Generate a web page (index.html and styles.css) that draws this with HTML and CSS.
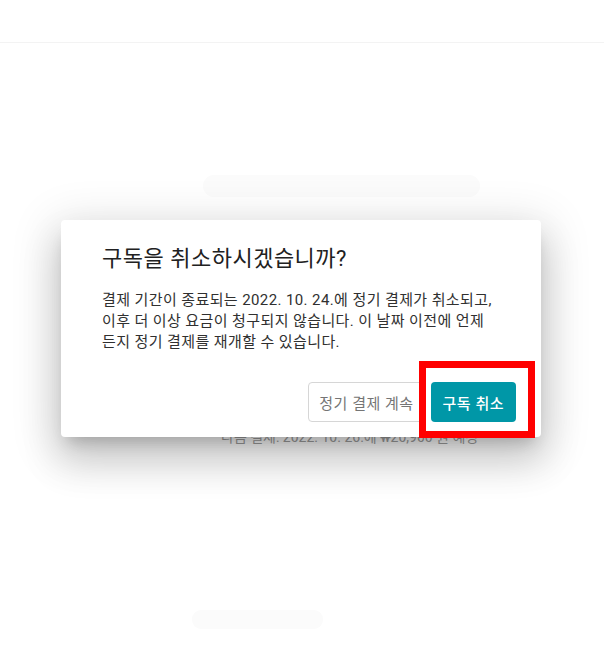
FILE: index.html
```html
<!DOCTYPE html>
<html lang="ko">
<head>
<meta charset="utf-8">
<title>구독 취소</title>
<link rel="stylesheet" href="styles.css">
</head>
<body>
<header class="topbar"></header>
<main class="page">
  <div class="skeleton skeleton-wide"></div>
  <p class="next-payment">다음 결제: 2022. 10. 26.에 ₩20,900 원 예정</p>
  <div class="skeleton skeleton-short"></div>
</main>

<div class="dialog" role="dialog">
  <h2 class="dialog-title">구독을 취소하시겠습니까?</h2>
  <p class="dialog-body">결제 기간이 종료되는 2022. 10. 24.에 정기 결제가 취소되고,<br>이후 더 이상 요금이 청구되지 않습니다. 이 날짜 이전에 언제<br>든지 정기 결제를 재개할 수 있습니다.</p>
  <div class="dialog-actions">
    <button class="btn btn-outline">정기 결제 계속</button>
    <button class="btn btn-primary">구독 취소</button>
  </div>
</div>
<div class="highlight"></div>
</body>
</html>
```
FILE: styles.css
```css
html, body {
  margin: 0;
  padding: 0;
  background: #ffffff;
  font-family: Roboto, "Noto Sans CJK KR", sans-serif;
}

.topbar {
  height: 42px;
  border-bottom: 1px solid #f3f3f3;
  background: #ffffff;
}

.page {
  display: flex;
  flex-direction: column;
  align-items: flex-start;
  padding-top: 132px;
}

.skeleton {
  background: #fbfbfb;
  border-radius: 11px;
}

.skeleton-wide {
  margin-left: 203px;
  width: 277px;
  height: 22px;
}

.skeleton-short {
  margin-left: 192px;
  width: 131px;
  height: 19px;
  margin-top: 163px;
  border-radius: 9px;
}

.next-payment {
  margin: 230px 0 0 221px;
  font-size: 14px;
  line-height: 20px;
  color: #a0a0a0;
  white-space: nowrap;
}

.dialog {
  position: absolute;
  left: 61px;
  top: 220px;
  width: 480px;
  box-sizing: border-box;
  padding: 25px 25px 15px 41px;
  background: #ffffff;
  border-radius: 4px;
  box-shadow: 0 11px 15px -7px rgba(0,0,0,0.2), 0 24px 38px 3px rgba(0,0,0,0.14), 0 9px 46px 8px rgba(0,0,0,0.12);
}

.dialog-title {
  margin: 0;
  font-size: 22px;
  line-height: 28px;
  font-weight: 400;
  letter-spacing: 0.5px;
  color: #212121;
}

.dialog-body {
  margin: 17px 0 0 0;
  font-size: 15px;
  line-height: 21px;
  letter-spacing: 0.4px;
  color: #303030;
  white-space: nowrap;
}

.dialog-actions {
  display: flex;
  justify-content: flex-end;
  gap: 6px;
  margin-top: 29px;
}

.btn {
  height: 40px;
  font-family: inherit;
  font-size: 15px;
  letter-spacing: 0.5px;
  border-radius: 4px;
  cursor: pointer;
}

.btn-outline {
  padding: 0 10px;
  background: #ffffff;
  border: 1px solid #d6d6d6;
  color: #757575;
}

.btn-primary {
  padding: 0 12px;
  background: #0097a7;
  border: none;
  color: #ffffff;
  font-weight: 500;
}

.highlight {
  position: absolute;
  left: 419px;
  top: 361px;
  width: 116px;
  height: 77px;
  box-sizing: border-box;
  border: 7px solid #ff0000;
}
```
